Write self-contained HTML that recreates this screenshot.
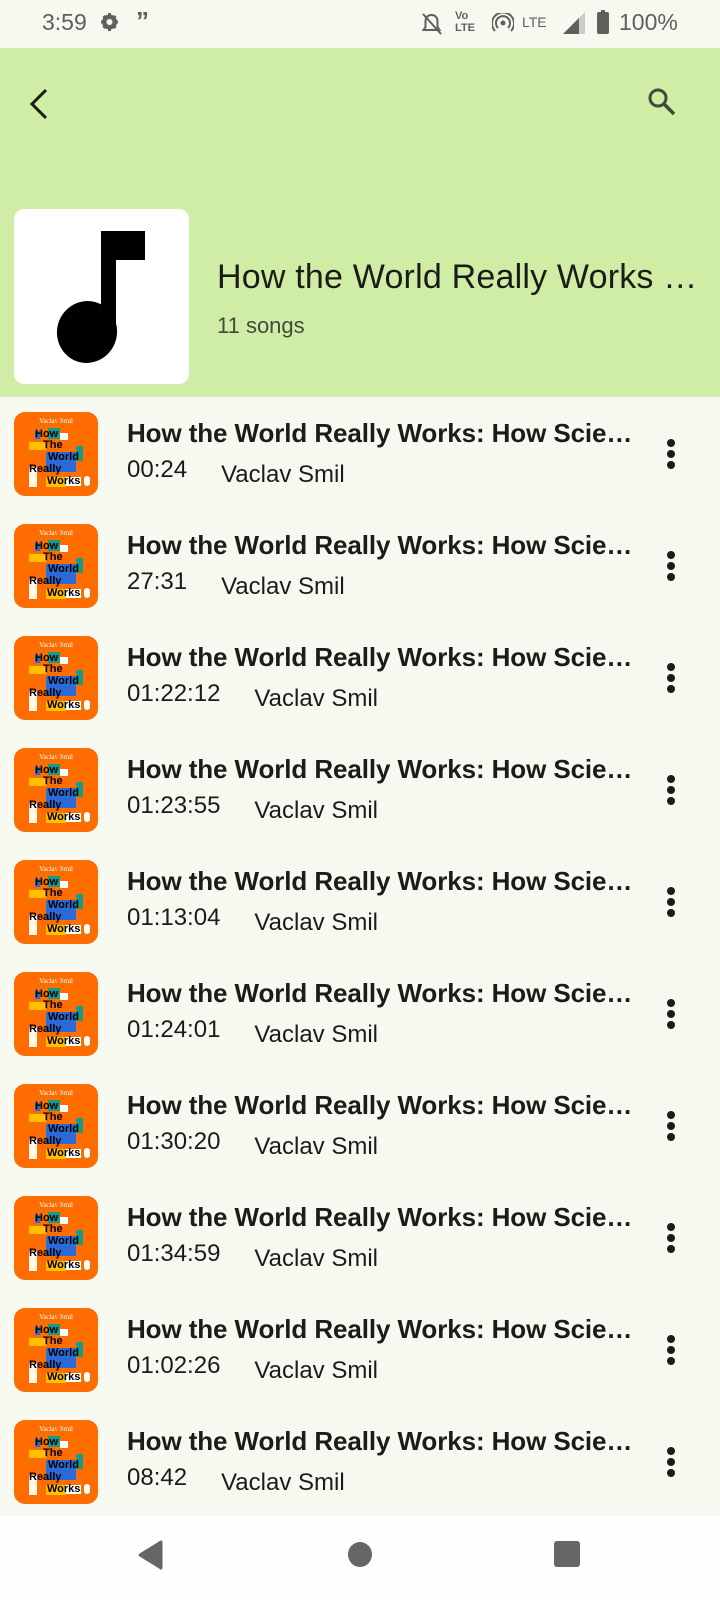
<!DOCTYPE html>
<html><head><meta charset="utf-8">
<style>
*{margin:0;padding:0;box-sizing:border-box}
body{width:720px;height:1600px;background:#f7f8f0;font-family:"Liberation Sans",Roboto,sans-serif;position:relative;overflow:hidden;color:#1b1c18}
.abs{position:absolute}
.sb{position:absolute;top:0;left:0;width:720px;height:48px;background:#f7f8f0;color:#5f605c}
.hdr{position:absolute;top:48px;left:0;width:720px;height:349px;background:#cfeda4}
.row{position:absolute;left:0;width:720px;height:112px}
.th{position:absolute;left:14px;top:0;width:84px;height:84px;background:#ff6d00;border-radius:11px;overflow:hidden}
.th div{position:absolute}
.th span{position:absolute;font-weight:bold;font-size:11px;color:#000;line-height:11px}
.t{position:absolute;left:127px;top:6px;width:510px;font-weight:bold;font-size:26px;white-space:nowrap;overflow:hidden;text-overflow:ellipsis;line-height:30px;letter-spacing:-0.1px}
.d{position:absolute;left:127px;top:44px;font-size:24px;color:#1b1c18;line-height:28px;white-space:nowrap}
.d b{font-weight:normal;margin-left:34px;position:relative;top:5px}
.dots{position:absolute;left:667px;top:20px;width:8px}
.dots i{display:block;width:8px;height:8px;border-radius:50%;background:#1b1c18;margin-bottom:3px}
.nav{position:absolute;top:1516px;left:0;width:720px;height:84px;background:#fefefe}
</style></head><body>
<div class="sb">
 <div class="abs" style="left:42px;top:9px;font-size:23px;color:#5f605c">3:59</div>
 <svg class="abs" style="left:100px;top:12px" width="19" height="20" viewBox="0 0 19 20"><circle cx="9.5" cy="10" r="6" fill="none" stroke="#5f605c" stroke-width="3"/><g stroke="#5f605c" stroke-width="3"><line x1="9.5" y1="1" x2="9.5" y2="19"/><line x1="1" y1="10" x2="18" y2="10"/><line x1="3.5" y1="4" x2="15.5" y2="16"/><line x1="15.5" y1="4" x2="3.5" y2="16"/></g><circle cx="9.5" cy="10" r="3" fill="#f7f8f0"/></svg>
 <div class="abs" style="left:136px;top:6px;font-size:26px;font-weight:bold;color:#5f605c">&#8221;</div>
 <svg class="abs" style="left:420px;top:12px" width="23" height="24" viewBox="0 0 23 24"><path d="M11.5 3c-4 0-6 3-6 6v6l-2 3h16l-2-3V9c0-3-2-6-6-6z" fill="none" stroke="#5f605c" stroke-width="2"/><line x1="3" y1="2" x2="21" y2="22" stroke="#5f605c" stroke-width="2"/></svg>
 <div class="abs" style="left:455px;top:10px;font-size:11px;line-height:12px;color:#5f605c;font-weight:bold">Vo<br>LTE</div>
 <svg class="abs" style="left:492px;top:13px" width="22" height="20" viewBox="0 0 22 20"><circle cx="11" cy="10" r="2.5" fill="#5f605c"/><path d="M6 15a7 7 0 1 1 10 0M3 18a11 11 0 1 1 16 0" fill="none" stroke="#5f605c" stroke-width="2"/></svg>
 <div class="abs" style="left:522px;top:14px;font-size:14px;color:#5f605c">LTE</div>
 <svg class="abs" style="left:563px;top:12px" width="22" height="22"><polygon points="0,22 22,0 22,22" fill="#ccc"/><polygon points="0,22 16,6 16,22" fill="#5f605c"/></svg>
 <div class="abs" style="left:597px;top:12px;width:12px;height:22px;background:#5f605c;border-radius:2px"></div>
 <div class="abs" style="left:601px;top:10px;width:4px;height:3px;background:#5f605c"></div>
 <div class="abs" style="left:619px;top:9px;font-size:23px;color:#5f605c">100%</div>
</div>
<div class="hdr">
 <svg class="abs" style="left:26px;top:38px" width="24" height="36" viewBox="0 0 24 36"><path d="M20 4L6 18l14 14" fill="none" stroke="#1b1c18" stroke-width="3"/></svg>
 <svg class="abs" style="left:646px;top:38px" width="34" height="34" viewBox="0 0 34 34"><circle cx="12" cy="12" r="8" fill="none" stroke="#45483f" stroke-width="3"/><line x1="18" y1="18" x2="28" y2="28" stroke="#45483f" stroke-width="3.5"/></svg>
 <div class="abs" style="left:14px;top:161px;width:175px;height:175px;background:#fff;border-radius:10px">
  <svg width="175" height="175" viewBox="0 0 175 175"><rect x="87" y="22" width="15" height="100" fill="#000"/><rect x="87" y="22" width="44" height="29" fill="#000"/><ellipse cx="73" cy="123" rx="30" ry="31" fill="#000" transform="rotate(15 73 123)"/></svg>
 </div>
 <div class="abs" style="left:217px;top:210px;font-size:34px;color:#1b1c18;white-space:nowrap;letter-spacing:0.2px">How the World Really Works …</div>
 <div class="abs" style="left:217px;top:265px;font-size:22px;color:#45483f">11 songs</div>
</div>

<div id="list"></div>
<script>
var times=["00:24","27:31","01:22:12","01:23:55","01:13:04","01:24:01","01:30:20","01:34:59","01:02:26","08:42"];
var h="";
for(var i=0;i<10;i++){
 h+='<div class="row" style="top:'+(412+i*112)+'px"><div class="th">'+
 '<div style="left:0;top:5px;width:84px;text-align:center;color:#fff;font-size:7px;font-family:Liberation Serif,serif">Vaclav Smil</div>'+
 '<div style="left:21px;top:19px;width:5px;height:8px;background:#2a6bd8"></div>'+
 '<div style="left:34px;top:16px;width:12px;height:11px;background:#1a9a8a"></div>'+
 '<div style="left:46px;top:21px;width:8px;height:7px;background:#fff"></div>'+
 '<div style="left:15px;top:30px;width:17px;height:8px;background:#ffc000"></div>'+
 '<div style="left:62px;top:34px;width:7px;height:15px;background:#1a9a8a"></div>'+
 '<div style="left:32px;top:40px;width:30px;height:20px;background:#2a6bd8"></div>'+
 '<div style="left:15px;top:55px;width:8px;height:20px;background:#fff8e8"></div>'+
 '<div style="left:32px;top:65px;width:20px;height:10px;background:#ffc000"></div>'+
 '<div style="left:52px;top:65px;width:15px;height:9px;background:#fff"></div>'+
 '<span style="left:21px;top:17px">How</span><span style="left:29px;top:28px">The</span><span style="left:34px;top:40px">World</span><span style="left:15px;top:52px">Really</span><span style="left:33px;top:64px">Works</span>'+
 '<div style="left:70px;top:64px;width:6px;height:10px;border-radius:3px;background:#fff"></div>'+
 '</div><div class="t">How the World Really Works: How Science Explains</div>'+
 '<div class="d">'+times[i]+'<b>Vaclav Smil</b></div>'+
 '<div class="dots" style="left:667px;top:27px"><i></i><i></i><i></i></div></div>';
}
document.getElementById("list").innerHTML=h;
</script>

<div class="nav">
 <svg class="abs" style="left:137px;top:24px" width="26" height="30" viewBox="0 0 26 30"><path d="M24 2L3 15l21 13z" fill="#666" stroke="#666" stroke-width="3" stroke-linejoin="round"/></svg>
 <div class="abs" style="left:348px;top:26px;width:24px;height:25px;border-radius:50%;background:#666"></div>
 <div class="abs" style="left:554px;top:25px;width:26px;height:26px;border-radius:3px;background:#666"></div>
</div>
</body></html>
